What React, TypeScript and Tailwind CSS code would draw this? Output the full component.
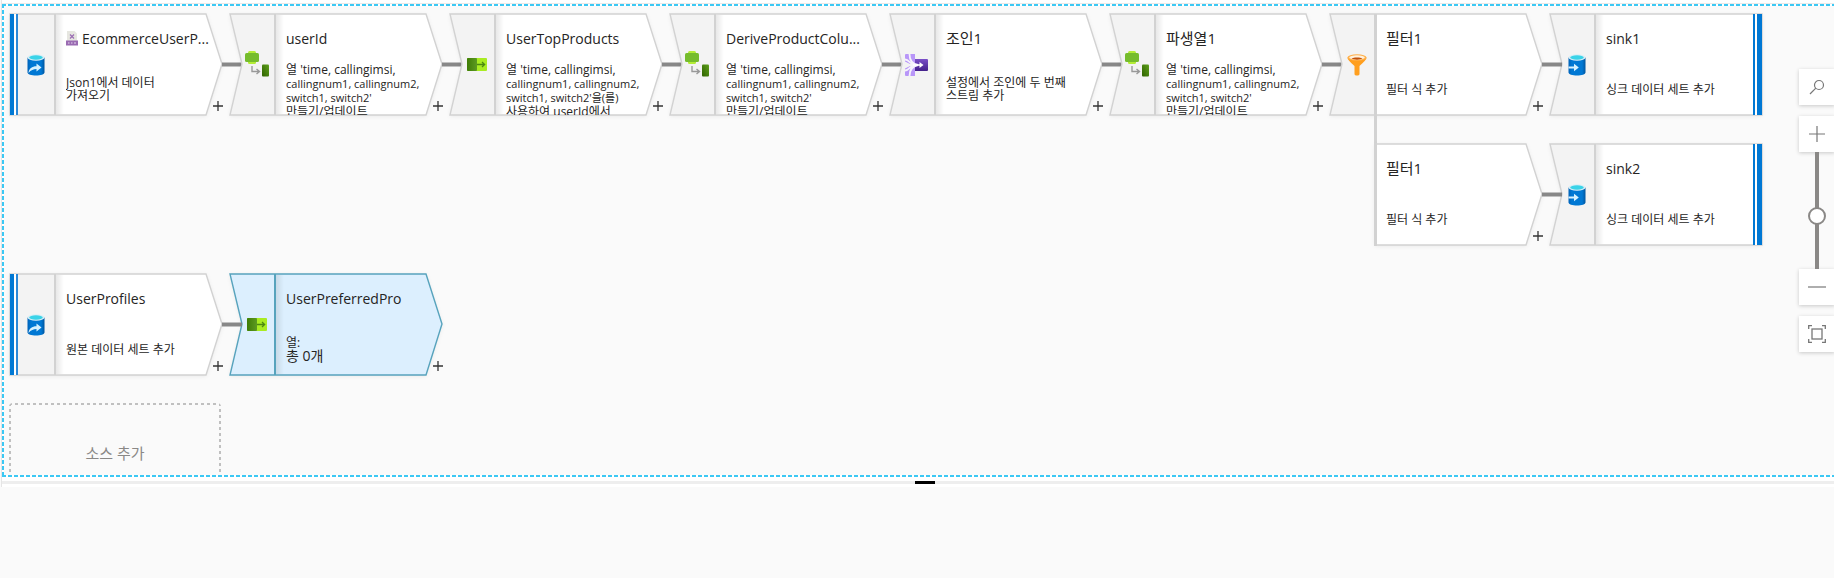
import React from "react";

type IconKind = "source" | "sink" | "derive" | "select" | "join" | "filter";

function CylinderBase({ children }: { children: React.ReactNode }) {
  return (
    <svg width="18" height="22" viewBox="0 0 18 22" aria-hidden="true">
      <defs>
        <linearGradient id="cyl" x1="0" x2="1" y1="0" y2="0">
          <stop offset="0" stopColor="#0062b8" />
          <stop offset="0.2" stopColor="#0078d4" />
          <stop offset="0.8" stopColor="#0078d4" />
          <stop offset="1" stopColor="#00569f" />
        </linearGradient>
      </defs>
      <path d="M.5 3.500v15c0 1.700 3.800 3 8.500 3s8.500-1.300 8.500-3v-15z" fill="url(#cyl)" />
      <ellipse cx="9" cy="3.500" rx="8.500" ry="3.200" fill="#d9eef5" />
      <ellipse cx="9" cy="3.500" rx="6.800" ry="2.200" fill="#3ad3e8" />
      {children}
    </svg>
  );
}

function NodeIcon({ kind }: { kind: IconKind }) {
  switch (kind) {
    case "source":
      return (
        <CylinderBase>
          <path d="M1.500 19C2 14.500 5 12.300 9.500 12.300V9.500L14.500 13.500 9.500 17.500V15c-3 0-5.500 1-8 4z" fill="#d6f2ff" />
        </CylinderBase>
      );
    case "sink":
      return (
        <CylinderBase>
          <path d="M.5 12.500h5.500V9.800L10.800 13.500l-4.800 3.700v-2.700H.5z" fill="#d6f2ff" />
        </CylinderBase>
      );
    case "derive":
      return (
        <svg width="25" height="26" viewBox="0 0 25 26" aria-hidden="true">
          <defs>
            <linearGradient id="drv" x1="0" x2="1" y1="1" y2="0">
              <stop offset="0" stopColor="#2f6200" />
              <stop offset="1" stopColor="#5ea01c" />
            </linearGradient>
          </defs>
          <rect x="3" y="0" width="8" height="13" rx="1.500" fill="#b4ec36" />
          <rect x="0" y="2" width="14" height="9" rx="1.500" fill="#76bc2d" />
          <path d="M7 15v5.500h7M11.500 18l3 2.500-3 2.500" fill="none" stroke="#999" strokeWidth="1.400" />
          <rect x="17" y="13.500" width="7" height="12" rx="1" fill="url(#drv)" />
        </svg>
      );
    case "select":
      return (
        <svg width="20" height="13" viewBox="0 0 20 13" aria-hidden="true">
          <defs>
            <linearGradient id="sel" x1="0" x2="1" y1="0" y2="0">
              <stop offset="0" stopColor="#3f7d06" />
              <stop offset="1" stopColor="#5c9a22" />
            </linearGradient>
          </defs>
          <rect x="0" y="0" width="20" height="13" rx="1" fill="#a9ec22" />
          <rect x="0" y="0" width="10" height="13" rx="1" fill="url(#sel)" />
          <path d="M10 6.500h7.500M15 4l2.600 2.500L15 9" fill="none" stroke="#4c8a10" strokeWidth="1.300" />
        </svg>
      );
    case "join":
      return (
        <svg width="23" height="22" viewBox="0 0 23 22" aria-hidden="true">
          <defs>
            <linearGradient id="jn" x1="0" x2="0" y1="0" y2="1">
              <stop offset="0" stopColor="#7a4fc8" />
              <stop offset="1" stopColor="#43208a" />
            </linearGradient>
          </defs>
          <path d="M1 0h9v10H0V1a1 1 0 0 1 1-1zM0 12h10v10H1a1 1 0 0 1-1-1z" fill="#b896f8" />
          <path d="M0 7.500L7 11L0 14.500z" fill="#f3f3f3" />
          <path d="M10 5h12a1 1 0 0 1 1 1v10a1 1 0 0 1-1 1H10z" fill="url(#jn)" />
          <path d="M4.500 0C4.500 6 7.500 10 13 11C7.500 12 4.500 16 4.500 22M0 5.500C4 5.500 5 10 9 11C5 12 4 16.500 0 16.500" fill="none" stroke="#f5f2fc" strokeWidth="1.800" />
          <path d="M8 11h8.500" fill="none" stroke="#fff" strokeWidth="1.600" />
          <path d="M14.500 8l4 3-4 3z" fill="#fff" />
        </svg>
      );
    case "filter":
      return (
        <svg width="20" height="22" viewBox="0 0 20 22" aria-hidden="true">
          <path d="M.5 3.500C.5 6 3 7.500 7.500 12v8c0 2 5 2 5 0v-8C17 7.500 19.500 6 19.500 3.500z" fill="#ff9f1f" />
          <ellipse cx="10" cy="3.500" rx="9.500" ry="3.300" fill="#ffb04a" />
          <ellipse cx="10" cy="3.500" rx="7.800" ry="2.200" fill="#fff1dc" />
          <path d="M4.500 4.800c2-1.600 9-1.600 11 0-2 1.100-9 1.100-11 0z" fill="#c2500a" />
        </svg>
      );
  }
}

function JsonBadge() {
  return (
    <svg className="mr-1 shrink-0" width="12" height="15" viewBox="0 0 12 15" aria-hidden="true">
      <path d="M1 0h7.500L11 2.500V14H1z" fill="#e6e6e0" />
      <path d="M4 3.500l4 4M8 3.500l-4 4" stroke="#9b6db3" strokeWidth="1.200" />
      <rect x="0" y="9.500" width="12" height="5" fill="#9a6bb2" />
      <path d="M2 12h1.500M5 12h1.500M8 12h2" stroke="#e6d8ee" strokeWidth="1.200" />
    </svg>
  );
}

interface NodeProps {
  icon?: IconKind;
  title: string;
  lines: string[];
  badge?: boolean;
  start?: boolean;
  end?: boolean;
  selected?: boolean;
  linked?: boolean;
  branch?: boolean;
  trunk?: boolean;
}

function NodeShape({ start, end, selected, linked, branch, trunk }: Partial<NodeProps>) {
  const stroke = selected ? "#57a3bd" : "#d2d2d2";
  const right = end ? "L213 102V1Z" : "L197 102L213 51L197 1Z";
  const outline = start ? "M1 1V102" + right : branch ? "M46 1V102" + right : "M197 1H1L13 51L1 102" + right;
  return (
    <svg className="absolute inset-0 overflow-visible" width="220" height="103" viewBox="0 0 220 103" aria-hidden="true">
      <defs>
        <linearGradient id="fade" x1="0" x2="1" y1="0" y2="0">
          <stop offset="0" stopColor="#000" stopOpacity="0.09" />
          <stop offset="1" stopColor="#000" stopOpacity="0" />
        </linearGradient>
      </defs>
      <path d={outline} fill={selected ? "#dceffe" : "#fff"} className="drop-shadow-[0_1px_2px_rgba(0,0,0,0.08)]" />
      {!branch && (
        <path d={start ? "M1 1V102H46V1Z" : "M1 1L13 51L1 102H46V1Z"} fill={selected ? "#dceffe" : "#f3f3f3"} />
      )}
      {!branch && !trunk && <rect x="47" y="2" width="8" height="99" fill="url(#fade)" />}
      <path d={outline} fill="none" stroke={stroke} strokeWidth="1.400" />
      {!branch && <path d="M46 1V102" stroke={stroke} strokeWidth="2" />}
      {trunk && <path d="M46.500 1V232" stroke="#d2d2d2" strokeWidth="3" />}
      {branch && <path d="M46.500 0V103" stroke="#d2d2d2" strokeWidth="3" />}
      {start && <path d="M3 1V102" stroke="#0078d4" strokeWidth="4" />}
      {start && <path d="M6 1V102" stroke="#fff" strokeWidth="2" />}
      {start && <path d="M8 1V102" stroke="#2b88d8" strokeWidth="2" />}
      {end && <path d="M205 1V102" stroke="#0078d4" strokeWidth="2" />}
      {end && <path d="M207 1V102" stroke="#fff" strokeWidth="2" />}
      {end && <path d="M210.500 1V102" stroke="#0078d4" strokeWidth="5" />}
      {linked && <path d="M213 51.500H233" stroke="#888" strokeWidth="4" />}
    </svg>
  );
}

function lineSize(line: string, index: number, { lines, selected }: NodeProps) {
  if (selected && index === 1) return "text-[14px]";
  return lines.length > 2 && /^[a-z]/.test(line) ? "text-[11px]" : "text-[12px]";
}

function FlowNode(props: NodeProps) {
  const { icon, title, lines, badge, end, start } = props;
  const hangulTitle = /[가-힣]/.test(title);
  return (
    <article className={`relative flex h-[103px] w-[220px] shrink-0 ${props.linked ? "z-10" : ""}`}>
      <NodeShape {...props} />
      <div className={`relative flex w-[46px] shrink-0 items-center justify-center ${icon === "derive" ? "pb-0.5 pl-2.5" : start ? "pl-2" : "pl-[9px]"}`}>
        {icon && <NodeIcon kind={icon} />}
      </div>
      <div className="relative flex w-[154px] flex-col pl-[11px]">
        <h3 className={`mt-[15px] flex h-5 shrink-0 items-center whitespace-nowrap text-[#252423] ${hangulTitle ? "text-[15px]" : "text-[14px]"}`}>
          {badge && <JsonBadge />}
          <span>{title}</span>
        </h3>
        <div className={`mt-[15px] flex h-[52px] flex-col overflow-hidden whitespace-nowrap text-[#252423] ${lines.length > 2 ? "leading-[14px]" : "justify-center leading-[13px]"}`}>
          {lines.map((line, index) => (
            <p key={line} className={lineSize(line, index, props)}>
              {line}
            </p>
          ))}
        </div>
      </div>
      {!end && (
        <button type="button" aria-label={`${title} +`} className="absolute top-[87px] left-[203px] flex size-3 items-center justify-center">
          <svg width="10" height="10" viewBox="0 0 10 10" aria-hidden="true">
            <path d="M5 0v10M0 5h10" stroke="#333" strokeWidth="1.300" />
          </svg>
        </button>
      )}
    </article>
  );
}

const columns = ["열 'time, callingimsi,", "callingnum1, callingnum2,"];
const derived = [...columns, "switch1, switch2'", "만들기/업데이트"];

const mainFlow: NodeProps[] = [
  { icon: "source", title: "EcommerceUserP...", lines: ["Json1에서 데이터", "가져오기"], badge: true, start: true, linked: true },
  { icon: "derive", title: "userId", lines: derived, linked: true },
  { icon: "select", title: "UserTopProducts", lines: [...columns, "switch1, switch2'을(를)", "사용하여 userId에서"], linked: true },
  { icon: "derive", title: "DeriveProductColu...", lines: derived, linked: true },
  { icon: "join", title: "조인1", lines: ["설정에서 조인에 두 번째", "스트림 추가"], linked: true },
  { icon: "derive", title: "파생열1", lines: derived, linked: true },
  { icon: "filter", title: "필터1", lines: ["필터 식 추가"], linked: true, trunk: true },
  { icon: "sink", title: "sink1", lines: ["싱크 데이터 세트 추가"], end: true },
];

const branchFlow: NodeProps[] = [
  { title: "필터1", lines: ["필터 식 추가"], branch: true, linked: true },
  { icon: "sink", title: "sink2", lines: ["싱크 데이터 세트 추가"], end: true },
];

const profileFlow: NodeProps[] = [
  { icon: "source", title: "UserProfiles", lines: ["원본 데이터 세트 추가"], start: true, linked: true },
  { icon: "select", title: "UserPreferredPro", lines: ["열:", "총 0개"], selected: true },
];

function FlowRow({ nodes, className = "" }: { nodes: NodeProps[]; className?: string }) {
  return (
    <div className={`flex ${className}`}>
      {nodes.map((node) => (
        <FlowNode key={node.title} {...node} />
      ))}
    </div>
  );
}

const toolButton = "flex h-9 w-9 items-center justify-center bg-white text-[#777] shadow-[0_1px_4px_rgba(0,0,0,0.2)]";

function ZoomTools() {
  return (
    <div className="absolute top-[63px] -right-px flex flex-col items-center">
      <button type="button" aria-label="검색" className={toolButton}>
        <svg width="16" height="16" viewBox="0 0 16 16" fill="none" stroke="currentColor" strokeWidth="1.200" aria-hidden="true">
          <circle cx="10" cy="6" r="4.500" />
          <path d="M6.800 9.200L1 15" />
        </svg>
      </button>
      <button type="button" aria-label="확대" className={`mt-[11px] ${toolButton}`}>
        <svg width="18" height="18" viewBox="0 0 18 18" stroke="currentColor" strokeWidth="1.200" aria-hidden="true">
          <path d="M9 1v16M1 9h16" />
        </svg>
      </button>
      <div className="relative flex h-[117px] w-9 justify-center">
        <span className="w-1 bg-[#8a8886]" />
        <input
          type="range"
          aria-label="확대/축소"
          defaultValue={45}
          className="absolute inset-0 h-full w-full appearance-none opacity-0 [writing-mode:vertical-lr]"
        />
        <span className="pointer-events-none absolute top-[55px] left-[9px] size-[18px] rounded-full border-2 border-[#8a8886] bg-white" />
      </div>
      <button type="button" aria-label="축소" className={toolButton}>
        <svg width="18" height="18" viewBox="0 0 18 18" stroke="currentColor" strokeWidth="1.200" aria-hidden="true">
          <path d="M0 9h18" />
        </svg>
      </button>
      <button type="button" aria-label="화면에 맞춤" className={`mt-[11px] ${toolButton}`}>
        <svg width="18" height="18" viewBox="0 0 18 18" fill="none" stroke="currentColor" strokeWidth="1.300" aria-hidden="true">
          <rect x="4" y="4" width="10" height="10" />
          <path d="M.7 4V.7H4M14 .7h3.300V4M17.300 14v3.300H14M4 17.300H.7V14" />
        </svg>
      </button>
    </div>
  );
}

const canvasFrame =
  "bg-[image:repeating-linear-gradient(90deg,#3cc8f4_0_4px,transparent_4px_6px),repeating-linear-gradient(90deg,#3cc8f4_0_4px,transparent_4px_6px),repeating-linear-gradient(180deg,#3cc8f4_0_4px,transparent_4px_6px)] bg-[position:top_left,bottom_left,top_left] bg-[size:100%_2px,100%_2px,2px_100%] bg-no-repeat";

const dashedBox =
  "bg-[image:repeating-linear-gradient(90deg,#c0c0c0_0_3px,transparent_3px_6px),repeating-linear-gradient(180deg,#c0c0c0_0_3px,transparent_3px_6px),repeating-linear-gradient(180deg,#c0c0c0_0_3px,transparent_3px_6px)] bg-[position:top_left,top_left,top_right] bg-[size:100%_2px,2px_100%,2px_100%] bg-no-repeat";

export default function App() {
  return (
    <div className="min-h-screen overflow-hidden bg-[#fafafa] font-['Open_Sans','Noto_Sans_CJK_KR',sans-serif]">
      <div className="ml-px border-l border-[#e5e5e5] bg-white">
        <div className="h-1 border-b border-[#eaeaea]" />
        <div className={`py-0.5 pl-0.5 ${canvasFrame}`}>
          <main className="relative h-[469px] overflow-hidden bg-[#fafafa]">
            <div className="flex flex-col items-start gap-[27px] pt-[7px] pl-[5px]">
              <FlowRow nodes={mainFlow} />
              <FlowRow nodes={branchFlow} className="pl-[1320px]" />
              <FlowRow nodes={profileFlow} />
              <button type="button" className={`h-[100px] w-[212px] rounded text-[15px] text-[#8a8886] ${dashedBox}`}>
                소스 추가
              </button>
            </div>
            <ZoomTools />
          </main>
        </div>
        <div className="flex h-[10px] flex-col items-center justify-center" role="separator">
          <div className="flex h-[3px] w-full items-center justify-center bg-[#eee] pl-3.5">
            <span className="h-[3px] w-5 bg-black" />
          </div>
        </div>
      </div>
    </div>
  );
}
